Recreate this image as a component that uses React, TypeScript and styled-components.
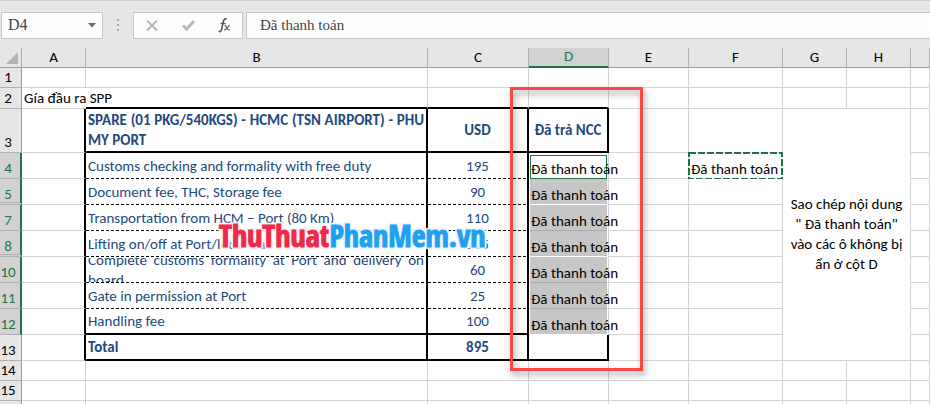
import React from 'react';
import styled, { createGlobalStyle, css } from 'styled-components';

const GRID = '#d4d4d4';
const GREEN = '#217346';

const Global = createGlobalStyle`
  *, *::before, *::after { box-sizing: border-box; }
  body {
    margin: 0;
    background: #ffffff;
    color: #000000;
    font-family: Carlito, Lato, "Noto Sans", sans-serif;
    font-size: 15px;
    overflow: hidden;
  }
`;

const Page = styled.main`
  height: 100vh;
  overflow: hidden;
`;

const FormulaBar = styled.header`
  display: flex;
  align-items: center;
  height: 48px;
  padding: 1px 0 0 1px;
  background: #e6e6e6;
  border-top: 1px solid #d0d0d0;
`;

const field = css`
  height: 27px;
  background: #fdfdfd;
  border: 1px solid #c6c6c6;
`;

const NameBox = styled.div`
  ${field}
  display: flex;
  align-items: center;
  width: 102px;
`;

const TextInput = styled.input<{ $size: number }>`
  flex: 1;
  min-width: 0;
  height: 100%;
  padding: 0 0 0 6px;
  border: 0;
  outline: 0;
  background: transparent;
  color: #444444;
  font: ${(p) => p.$size}px "Liberation Serif", serif;
`;

const IconButton = styled.button`
  display: flex;
  align-items: center;
  justify-content: center;
  width: 36px;
  height: 100%;
  padding: 0;
  border: 0;
  background: transparent;
`;

const DropButton = styled(IconButton)`
  width: 20px;
`;

const Grip = styled.div`
  width: 30px;
  display: flex;
  justify-content: center;
`;

const Actions = styled.div`
  ${field}
  display: flex;
  width: 110px;
`;

const FormulaBox = styled.div`
  ${field}
  flex: 1;
  margin-left: 3px;
  border-right: 0;
  padding-left: 7px;
`;

const Sheet = styled.section`
  position: relative;
`;

const Grid = styled.table`
  width: 100%;
  table-layout: fixed;
  border-collapse: separate;
  border-spacing: 0;
`;

const Col = styled.col<{ $w?: number }>`
  width: ${(p) => (p.$w ? `${p.$w}px` : 'auto')};
`;

const Row = styled.tr<{ $h: number }>`
  height: ${(p) => p.$h}px;
`;

const ColumnHead = styled.th<{ $on?: boolean }>`
  height: 20px;
  padding: 0 0 1px;
  vertical-align: bottom;
  font-weight: 400;
  line-height: ${(p) => (p.$on ? 17 : 18)}px;
  background: ${(p) => (p.$on ? '#d2d2d2' : '#e6e6e6')};
  color: ${(p) => (p.$on ? GREEN : '#000000')};
  border-bottom: ${(p) => (p.$on ? `2px solid ${GREEN}` : '1px solid #9b9b9b')};
  border-right: 1px solid #b1b1b1;
`;

const Corner = styled(ColumnHead)`
  text-align: right;
  line-height: 0;
  padding: 0 3px 3px 0;
`;

const RowHead = styled.th<{ $on?: boolean; $gap?: boolean }>`
  padding: 0 5px 1px 0;
  vertical-align: bottom;
  text-align: center;
  font-weight: 400;
  line-height: 18px;
  background: ${(p) => (p.$on ? '#d2d2d2' : '#e6e6e6')};
  color: ${(p) => (p.$on ? GREEN : '#000000')};
  border-bottom: ${(p) => (p.$gap ? '3px double #b1b1b1' : '1px solid #b1b1b1')};
  border-right: ${(p) => (p.$on ? `2px solid ${GREEN}` : '1px solid #9b9b9b')};
  ${(p) => p.$on && 'padding-right: 4px;'}
  ${(p) => p.$gap && 'line-height: 14px;'}
`;

type Edge = 'grid' | 'thick' | 'dash' | 'none';

const edge = (e: Edge = 'grid') =>
  e === 'thick' ? '2px solid #000000' : e === 'grid' ? `1px solid ${GRID}` : '0';

const dashes = css`
  background-image: repeating-linear-gradient(90deg, #000000 0 3px, transparent 3px 5px);
  background-size: 100% 1px;
  background-position: left bottom;
  background-repeat: no-repeat;
`;

const Cell = styled.td<{ $right?: Edge; $bottom?: Edge; $align?: string }>`
  padding: 0 2px;
  line-height: 20px;
  white-space: nowrap;
  text-align: ${(p) => p.$align ?? 'left'};
  border-right: ${(p) => edge(p.$right)};
  border-bottom: ${(p) => edge(p.$bottom)};
  ${(p) => p.$bottom === 'dash' && dashes}
`;

const Spill = styled(Cell)`
  padding-bottom: 1px;
  vertical-align: bottom;
  line-height: 18px;
  overflow: visible;
`;

const TableText = styled(Cell)<{ $bold?: boolean }>`
  color: #1f497d;
  font-weight: ${(p) => (p.$bold ? 700 : 400)};
`;

const Justified = styled.div<{ $clip?: boolean }>`
  white-space: normal;
  text-align: justify;
  ${(p) =>
    p.$clip &&
    css`
      display: flex;
      align-items: center;
      height: 24px;
      overflow: hidden;
    `}
`;

const StatusCell = styled.td`
  padding: 0;
  border-right: 1px solid ${GRID};
`;

const Status = styled.div<{ $active?: boolean; $line: 'white' | 'gray' }>`
  display: flex;
  align-items: flex-end;
  width: 77px;
  height: 26px;
  margin-left: 1px;
  padding-left: 1px;
  line-height: 18px;
  white-space: nowrap;
  background: ${(p) => (p.$active ? '#ffffff' : '#c6c6c6')};
  border-bottom: 1px solid ${(p) => (p.$line === 'gray' ? '#ababab' : '#ffffff')};
  ${(p) =>
    p.$active &&
    css`
      height: 24px;
      margin-top: 1px;
      padding-left: 0;
      line-height: 17px;
      border: 1px solid ${GREEN};
    `}
`;

const Copied = styled.td`
  position: relative;
  padding: 0 2px 1px;
  vertical-align: bottom;
  line-height: 18px;
  white-space: nowrap;
`;

const Ants = styled.svg`
  position: absolute;
  inset: -1px 0 0 -1px;
  width: calc(100% + 1px);
  height: calc(100% + 1px);
`;

const Note = styled.td`
  padding: 0 4px 2px;
  text-align: center;
  line-height: 20px;
  border-right: 1px solid ${GRID};
  border-bottom: 1px solid ${GRID};
`;

const Highlight = styled.div`
  position: absolute;
  left: 510px;
  top: 39px;
  width: 133px;
  height: 284px;
  border: 3px solid #ff4545;
  filter: drop-shadow(2px 4px 3px rgba(0, 0, 0, 0.4));
  pointer-events: none;
`;

const Watermark = styled.div`
  position: absolute;
  left: 219px;
  top: 170px;
  font: 700 30px/36px "Liberation Sans Narrow", "Open Sans Condensed", "Roboto Condensed", Carlito, sans-serif;
  color: #1da1f2;
  -webkit-text-stroke: 1px #1da1f2;
  text-shadow: 2px 0 1px #f4f4f6, -2px 0 1px #f4f4f6, 0 2px 1px #f4f4f6, 0 -2px 1px #f4f4f6,
    2px 2px 1px #f4f4f6, -2px -2px 1px #f4f4f6, 2px -2px 1px #f4f4f6, -2px 2px 1px #f4f4f6;
  pointer-events: none;
`;

const Red = styled.span`
  color: #f0284a;
  -webkit-text-stroke-color: #f0284a;
`;

const PAID = 'Đã thanh toán';

const items = [
  { n: 4, text: 'Customs checking and formality with free duty', usd: 195 },
  { n: 5, text: 'Document fee, THC, Storage fee', usd: 90, gap: true },
  { n: 7, text: 'Transportation from HCM – Port (80 Km)', usd: 110 },
  { n: 8, text: 'Lifting on/off at Port/local trail', usd: 115, gap: true },
  { n: 10, text: 'Complete customs formality at Port and delivery on board', usd: 60, clip: true },
  { n: 11, text: 'Gate in permission at Port', usd: 25 },
  { n: 12, text: 'Handling fee', usd: 100, last: true },
];

const columns = ['A', 'B', 'C', 'D', 'E', 'F', 'G', 'H', ''];
const widths = [22, 64, 342, 101, 80, 80, 94, 64, 64];

function PlainRow({ n, h }: { n?: number; h: number }) {
  return (
    <Row $h={h}>
      <RowHead scope="row">{n}</RowHead>
      {columns.map((c) => (
        <Cell key={c} />
      ))}
    </Row>
  );
}

export default function App() {
  return (
    <Page>
      <Global />
      <FormulaBar>
        <NameBox>
          <TextInput $size={16} aria-label="Name box" defaultValue="D4" />
          <DropButton aria-label="Show names">
            <svg width="8" height="5" viewBox="0 0 8 5">
              <path d="M0 0h8L4 4.5z" fill="#6a6a6a" />
            </svg>
          </DropButton>
        </NameBox>
        <Grip>
          <svg width="2" height="12" viewBox="0 0 2 12" fill="#a6a6a6">
            <path d="M0 0h2v2H0zM0 5h2v2H0zM0 10h2v2H0z" />
          </svg>
        </Grip>
        <Actions>
          <IconButton aria-label="Cancel">
            <svg width="12" height="11" viewBox="0 0 12 11" fill="none" stroke="#b4b4b4" strokeWidth="2">
              <path d="M1 .5l10 10M11 .5l-10 10" />
            </svg>
          </IconButton>
          <IconButton aria-label="Enter">
            <svg width="13" height="11" viewBox="0 0 13 11" fill="none" stroke="#b8b8b8" strokeWidth="3">
              <path d="M1 5.5l3.5 3.5L12 1" />
            </svg>
          </IconButton>
          <IconButton aria-label="Insert function">
            <svg width="13" height="15" viewBox="0 0 13 15" fill="none" stroke="#555555">
              <path d="M8.500 1.600C7.500.400 6 .8 5.500 3L3.500 11.500C3 13.700 1.800 14 .8 13.200" strokeWidth="1.600" />
              <path d="M2.500 5.500h5" strokeWidth="1.200" />
              <path d="M6.500 7.500c2-.6 2 4.500 4.500 4.500h1M12 7.500c-2 0-3.500 4.500-6 4.500" strokeWidth="1.200" />
            </svg>
          </IconButton>
        </Actions>
        <FormulaBox>
          <TextInput $size={15} aria-label="Formula bar" defaultValue={PAID} />
        </FormulaBox>
      </FormulaBar>

      <Sheet>
        <Grid>
          <colgroup>
            {widths.map((w, i) => (
              <Col key={i} $w={w} />
            ))}
            <Col />
          </colgroup>
          <thead>
            <tr>
              <Corner>
                <svg width="12" height="12" viewBox="0 0 12 12">
                  <path d="M12 0v12H0z" fill="#b4b4b4" />
                </svg>
              </Corner>
              {columns.map((c) => (
                <ColumnHead key={c} scope="col" $on={c === 'D'}>
                  {c}
                </ColumnHead>
              ))}
            </tr>
          </thead>
          <tbody>
            <PlainRow n={1} h={20} />
            <Row $h={21}>
              <RowHead scope="row">2</RowHead>
              <Spill $right="none">Gía đầu ra SPP</Spill>
              <Cell $bottom="thick" />
              <Cell $bottom="thick" />
              <Cell $bottom="thick" />
              <Cell />
              <Cell />
              <Cell />
              <Cell />
              <Cell />
            </Row>
            <Row $h={44}>
              <RowHead scope="row">3</RowHead>
              <Cell $right="thick" />
              <TableText $bold $right="thick" $bottom="thick">
                <Justified>SPARE (01 PKG/540KGS) - HCMC (TSN AIRPORT) - PHU MY PORT</Justified>
              </TableText>
              <TableText $bold $align="center" $right="thick" $bottom="thick">
                USD
              </TableText>
              <TableText $bold $align="center" $right="thick" $bottom="thick">
                Đã trả NCC
              </TableText>
              <Cell />
              <Cell />
              <Note colSpan={2} rowSpan={9}>
                Sao chép nội dung
                <br />
                " Đã thanh toán"
                <br />
                vào các ô không bị
                <br />
                ẩn ở cột D
              </Note>
              <Cell />
            </Row>
            {items.map((it) => (
              <Row key={it.n} $h={26}>
                <RowHead scope="row" $on $gap={it.gap}>
                  {it.n}
                </RowHead>
                <Cell $right="thick" />
                <TableText $right="thick" $bottom={it.last ? 'thick' : 'dash'}>
                  <Justified $clip={it.clip}>
                    <span>{it.text}</span>
                  </Justified>
                </TableText>
                <TableText $align="center" $right="thick" $bottom={it.last ? 'thick' : 'dash'}>
                  {it.usd}
                </TableText>
                <StatusCell>
                  <Status $active={it.n === 4} $line={it.gap || it.last ? 'white' : 'gray'}>
                    {PAID}
                  </Status>
                </StatusCell>
                <Cell />
                {it.n === 4 ? (
                  <Copied>
                    {PAID}
                    <Ants>
                      <rect x="1" y="1" width="93" height="26" fill="none" stroke={GREEN} strokeWidth="2" strokeDasharray="7 2" />
                    </Ants>
                  </Copied>
                ) : (
                  <Cell />
                )}
                <Cell />
              </Row>
            ))}
            <Row $h={26}>
              <RowHead scope="row">13</RowHead>
              <Cell $right="thick" />
              <TableText $bold $right="thick" $bottom="thick">
                Total
              </TableText>
              <TableText $bold $align="center" $right="thick" $bottom="thick">
                895
              </TableText>
              <Cell $right="thick" $bottom="thick" />
              <Cell />
              <Cell />
              <Cell />
            </Row>
            <PlainRow n={14} h={20} />
            <PlainRow n={15} h={20} />
            <PlainRow h={20} />
          </tbody>
        </Grid>
        <Watermark>
          <Red>ThuThuat</Red>PhanMem.vn
        </Watermark>
        <Highlight />
      </Sheet>
    </Page>
  );
}
